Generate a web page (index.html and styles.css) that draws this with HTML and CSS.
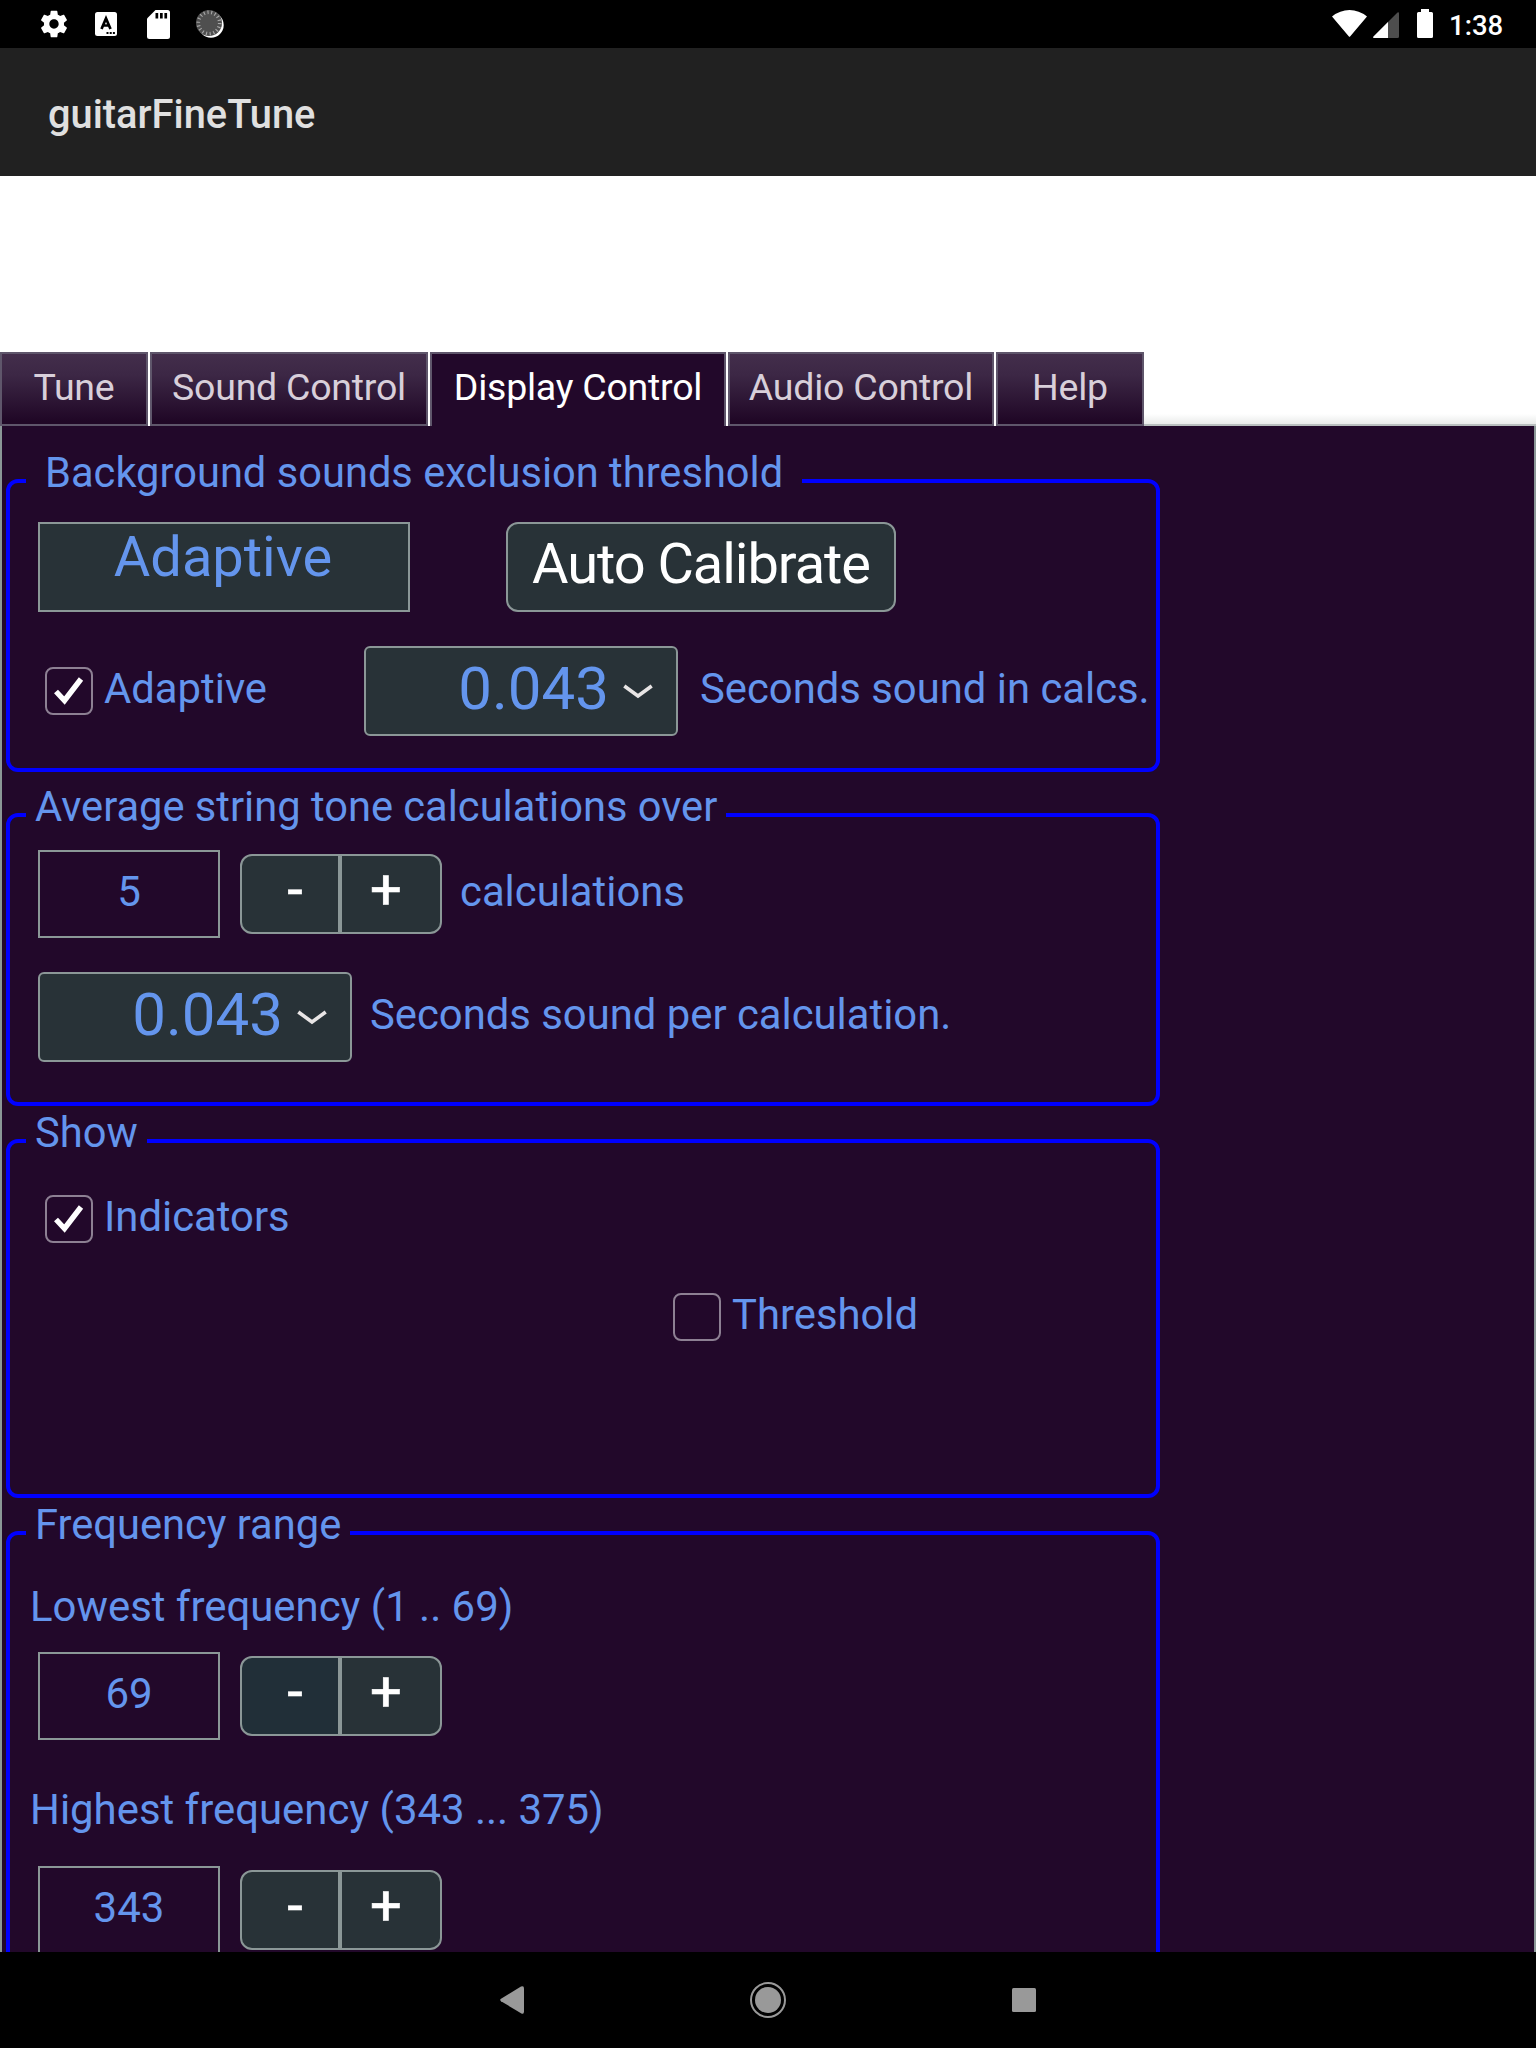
FILE: index.html
```html
<!DOCTYPE html>
<html lang="en">
<head>
<meta charset="utf-8">
<title>guitarFineTune</title>
<link rel="stylesheet" href="styles.css">
</head>
<body>
<div class="screen">
  <header class="status">
    <div class="status-left">
      <svg width="32" height="32" viewBox="0 0 24 24"><path fill="#fff" d="M19.43 12.98c.04-.32.07-.64.07-.98s-.03-.66-.07-.98l2.11-1.65c.19-.15.24-.42.12-.64l-2-3.46c-.12-.22-.39-.3-.61-.22l-2.49 1c-.52-.4-1.08-.73-1.69-.98l-.38-2.65C14.46 2.18 14.25 2 14 2h-4c-.25 0-.46.18-.49.42l-.38 2.65c-.61.25-1.17.59-1.69.98l-2.49-1c-.23-.09-.49 0-.61.22l-2 3.46c-.13.22-.07.49.12.64l2.11 1.65c-.04.32-.07.65-.07.98s.03.66.07.98l-2.11 1.65c-.19.15-.24.42-.12.64l2 3.46c.12.22.39.3.61.22l2.49-1c.52.4 1.08.73 1.69.98l.38 2.65c.03.24.24.42.49.42h4c.25 0 .46-.18.49-.42l.38-2.65c.61-.25 1.17-.59 1.69-.98l2.49 1c.23.09.49 0 .61-.22l2-3.46c.12-.22.07-.49-.12-.64l-2.11-1.65zM12 15.5c-1.93 0-3.5-1.57-3.5-3.5s1.57-3.5 3.5-3.5 3.500 1.570 3.500 3.500-1.570 3.500-3.500 3.500z"/></svg>
      <svg width="22" height="24" viewBox="0 0 22 24"><rect width="22" height="24" rx="2.500" fill="#fff"/><path d="M6.500 17 L11 6.500 L15.500 17 M8 13.500 H14" fill="none" stroke="#000" stroke-width="2.700"/><path d="M11.500 20h2v2h-2zM14.700 20h2v2h-2zM17.900 20h2v2h-2z" fill="#000"/></svg>
      <svg width="23" height="29" viewBox="0 0 23 29"><path d="M8.500 0H20.500Q23 0 23 2.500V26.500Q23 29 20.500 29H2.500Q0 29 0 26.500V8.500Z" fill="#fff"/><path d="M8.500 3h2.700v5.500H8.500zM13 3h2.700v5.500H13zM17.400 3h2.700v5.500h-2.700z" fill="#000"/></svg>
      <svg width="28" height="28" viewBox="0 0 28 28"><circle cx="15" cy="15" r="12.700" fill="#fff"/><circle cx="13" cy="13" r="13" fill="#4f4f4f"/><circle cx="13" cy="13" r="10.700" fill="none" stroke="#a8a8a8" stroke-width="3.600" stroke-dasharray="1.100 2.634"/></svg>
    </div>
    <div class="status-right">
      <svg width="35" height="27" viewBox="0 0 35 27"><path d="M0 6.500Q8 0 17.500 0T35 6.500L18.300 26.300Q17.500 27.300 16.700 26.300Z" fill="#fff"/></svg>
      <svg class="signal" width="26" height="26" viewBox="0 0 26 26"><path d="M1 26Q-.5 25.500.5 24.500L24.500.5Q26-.5 26 1.500V24.500Q26 26 24.500 26Z" fill="#4d4d4d"/><path d="M15 10V26H1Q-.5 25.500.5 24.500Z" fill="#fff"/></svg>
      <svg class="battery" width="16" height="29" viewBox="0 0 16 29"><path d="M4 0H12V3H14.500Q16 3 16 4.500V27.500Q16 29 14.500 29H1.500Q0 29 0 27.500V4.500Q0 3 1.500 3H4Z" fill="#fff"/></svg>
      <span class="clock">1:38</span>
    </div>
  </header>
  <div class="appbar">guitarFineTune</div>
  <nav class="tabs">
    <div class="tab tab-tune">Tune</div>
    <div class="tab tab-sound">Sound Control</div>
    <div class="tab tab-display active">Display Control</div>
    <div class="tab tab-audio">Audio Control</div>
    <div class="tab tab-help">Help</div>
    <div class="tab-rest"></div>
  </nav>
  <main class="panel">
    <section class="group g-threshold">
      <h2 class="legend wide">Background sounds exclusion threshold</h2>
      <div class="row calibrate">
        <div class="readout">Adaptive</div>
        <div class="button">Auto Calibrate</div>
      </div>
      <div class="row adaptive">
        <div class="check"><svg width="30" height="28" viewBox="0 0 30 28"><path d="M2 14.500L10.500 23.500L27 2" fill="none" stroke="#fff" stroke-width="5.400"/></svg></div>
        <span class="label check-label">Adaptive</span>
        <div class="combo"><span>0.043</span><svg width="30" height="15" viewBox="0 0 30 15"><path d="M1.300 2L15 12L28.700 2" fill="none" stroke="#e8e5e5" stroke-width="3.600"/></svg></div>
        <span class="label calcs">Seconds sound in calcs.</span>
      </div>
    </section>
    <section class="group g-average">
      <h2 class="legend">Average string tone calculations over</h2>
      <div class="row count">
        <div class="field">5</div>
        <div class="stepper"><span>-</span><span>+</span></div>
        <span class="label after-step">calculations</span>
      </div>
      <div class="row seconds">
        <div class="combo"><span>0.043</span><svg width="30" height="15" viewBox="0 0 30 15"><path d="M1.300 2L15 12L28.700 2" fill="none" stroke="#e8e5e5" stroke-width="3.600"/></svg></div>
        <span class="label after-combo">Seconds sound per calculation.</span>
      </div>
    </section>
    <section class="group g-show">
      <h2 class="legend">Show</h2>
      <div class="row indicators">
        <div class="check"><svg width="30" height="28" viewBox="0 0 30 28"><path d="M2 14.500L10.500 23.500L27 2" fill="none" stroke="#fff" stroke-width="5.400"/></svg></div>
        <span class="label check-label">Indicators</span>
      </div>
      <div class="row threshold">
        <div class="check"></div>
        <span class="label check-label">Threshold</span>
      </div>
    </section>
    <section class="group g-range">
      <h2 class="legend">Frequency range</h2>
      <p class="caption">Lowest frequency (1 .. 69)</p>
      <div class="row">
        <div class="field">69</div>
        <div class="stepper"><span class="pressed">-</span><span>+</span></div>
      </div>
      <p class="caption second">Highest frequency (343 ... 375)</p>
      <div class="row">
        <div class="field">343</div>
        <div class="stepper"><span>-</span><span>+</span></div>
      </div>
    </section>
  </main>
  <footer class="navbar">
    <svg width="24" height="28" viewBox="0 0 24 28"><path d="M21 .6Q24-.8 24 2.500V25.500Q24 28.800 21 27.200L1 15.200Q-.6 14 1 12.800Z" fill="#999"/></svg>
    <svg width="36" height="36" viewBox="0 0 36 36"><circle cx="18" cy="18" r="17" fill="none" stroke="#999" stroke-width="2"/><circle cx="18" cy="18" r="13" fill="#999"/></svg>
    <svg width="24" height="24" viewBox="0 0 24 24"><rect width="24" height="24" rx="1.500" fill="#999"/></svg>
  </footer>
</div>
</body>
</html>
```
FILE: styles.css
```css
* { box-sizing: border-box; }
body { margin: 0; background: #fff; font-family: Roboto, sans-serif; }
svg { display: block; flex: none; }
.screen { width: 1536px; height: 2048px; display: flex; flex-direction: column; overflow: hidden; }

.status { height: 48px; flex: none; background: #000; display: flex; justify-content: space-between; }
.status-left { display: flex; align-items: center; height: 48px; padding-left: 38px; }
.status-left svg:nth-child(2) { margin-left: 25px; }
.status-left svg:nth-child(3) { margin-left: 30px; }
.status-left svg:nth-child(4) { margin-left: 26px; }
.status-right { display: flex; align-items: flex-start; padding: 10px 32px 0 0; }
.signal { margin: 2px 0 0 6px; }
.battery { margin: -1px 0 0 18px; }
.clock { width: 55px; margin: 0 0 0 16px; color: #fff; font-size: 27.5px; line-height: 32px; font-weight: 500; white-space: nowrap; }

.appbar { height: 128px; flex: none; background: #212121; color: #e0e0e0; font-size: 39.8px; font-weight: 500; line-height: 122px; padding: 6px 0 0 48px; overflow: hidden; }

.tabs { height: 74px; flex: none; margin-top: 176px; display: flex; gap: 2px; }
.tab { height: 74px; border: 2px solid #5f566b; background: linear-gradient(#432e4b, #3c2745 30%, #200726 96%); color: #d8cfda; font-size: 37.5px; letter-spacing: -.25px; line-height: 66px; text-align: center; white-space: nowrap; }
.tab-tune { width: 148px; }
.tab-sound { width: 278px; }
.tab-display { width: 296px; }
.tab-audio { width: 266px; }
.tab-help { width: 148px; }
.tab.active { background: #22082a; color: #fff; border-bottom: 0; }
.tab-rest { flex: 1; margin-left: -2px; border-bottom: 2px solid #b9bfbf; background: linear-gradient(#fff 86%, #e9ebea); }

.panel { flex: 1; min-height: 0; overflow: hidden; background: #22082a; border: solid #8b9797; border-width: 0 2px; padding: 53px 0 0 4px; color: #6495ed; }
.group { width: 1154px; border: 4px solid #00f; border-radius: 12px; display: flex; flex-direction: column; align-items: flex-start; }
.legend { margin: -34px 0 0 16px; height: 48px; padding: 0 9px; background: #22082a; font-size: 41.65px; font-weight: 400; line-height: 48px; white-space: nowrap; }
.legend.wide { padding: 0 19px; }
.row { display: flex; align-items: center; padding-left: 28px; }
.label { font-size: 41.8px; line-height: 48px; padding-bottom: 5px; white-space: nowrap; }

.g-threshold { height: 293px; }
.calibrate { margin-top: 25px; gap: 96px; }
.readout { width: 372px; height: 90px; border: 2px solid #8b9797; font-size: 56px; line-height: 66px; text-align: center; background: #283237; padding-right: 2px; }
.button { width: 390px; height: 90px; border: 2px solid #8b9797; border-radius: 12px; background: #283237; color: #fff; font-size: 56px; letter-spacing: -1.05px; line-height: 80px; text-align: center; }
.adaptive { margin-top: 34px; padding-left: 35px; }
.check { width: 48px; height: 48px; flex: none; border: 2px solid #8d8093; border-radius: 8px; display: flex; align-items: center; justify-content: center; }
.check-label { margin-left: 11px; }
.adaptive .check-label { width: 260px; }
.combo { width: 314px; height: 90px; border: 2px solid #8b9797; border-radius: 6px; background: #283237; display: flex; align-items: center; justify-content: flex-end; gap: 14px; padding-right: 23px; font-size: 60px; }
.combo span { line-height: 70px; padding-bottom: 5px; }
.combo svg { margin-top: 1px; }
.after-combo { margin-left: 18px; }
.calcs { margin-left: 22px; }

.g-average { margin-top: 41px; height: 293px; }
.count { margin-top: 19px; }
.field { width: 182px; height: 88px; border: 2px solid #8b9797; font-size: 42px; line-height: 79px; text-align: center; }
.stepper { width: 202px; height: 80px; margin-left: 20px; border: 2px solid #8b9797; border-radius: 12px; overflow: hidden; background: #8b9797; display: flex; gap: 4px; }
.stepper span { width: 96px; background: #283237; color: #fff; font-size: 56px; font-weight: 400; -webkit-text-stroke: .6px #fff; line-height: 69px; text-align: center; padding-left: 10px; }
.stepper span + span { width: 98px; padding: 0 10px 0 0; }
.stepper .pressed { background: #212f38; }
.after-step { margin-left: 18px; }
.seconds { margin-top: 34px; }

.g-show { margin-top: 33px; height: 359px; }
.indicators { margin-top: 36px; padding-left: 35px; }
.threshold { margin-top: 47px; padding-left: 663px; }
.g-show .label { padding-bottom: 3px; }

.g-range { margin-top: 33px; height: 600px; }
.caption { margin: 34px 0 0 20px; font-size: 41.9px; line-height: 48px; white-space: nowrap; }
.g-range .row { margin-top: 21px; }
.caption.second { margin-top: 46px; }
.g-range .second + .row { margin-top: 32px; }

.navbar { height: 96px; flex: none; background: #000; display: flex; align-items: center; justify-content: center; gap: 226px; }
```
